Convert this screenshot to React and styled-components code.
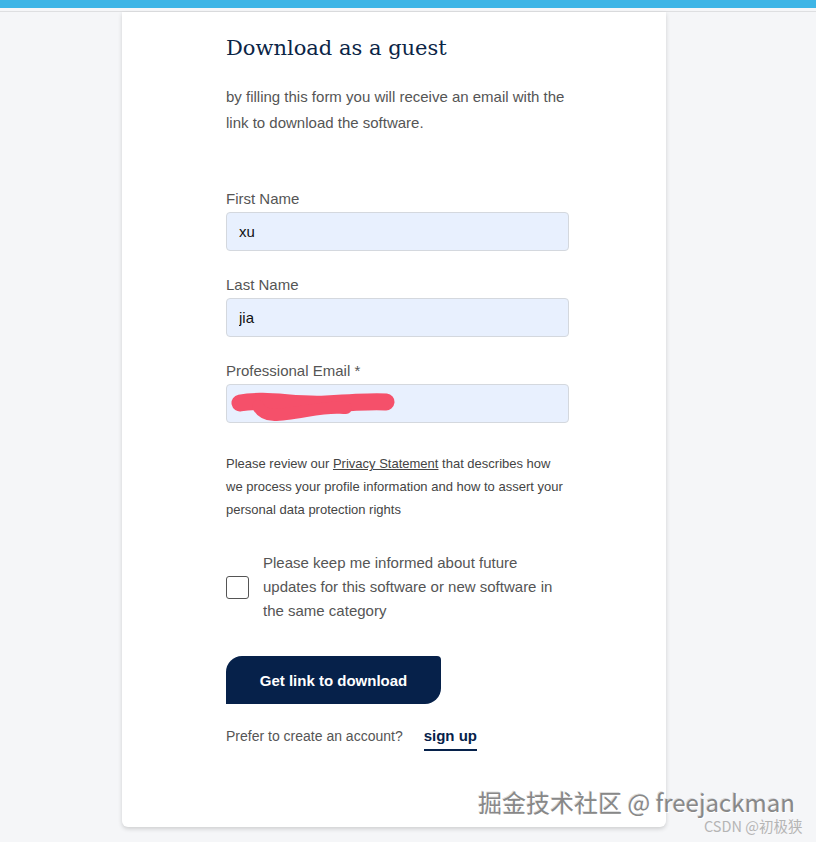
import styled, { createGlobalStyle } from "styled-components";

const GlobalStyle = createGlobalStyle`
	html, body {
		margin: 0;
		padding: 0;
		background: #f5f6f8;
	}
	body {
		font-family: "Liberation Sans", Arial, sans-serif;
	}
`;

const Page = styled.div`
	position: relative;
	min-height: 842px;
	overflow: hidden;
`;

const TopBar = styled.div`
	height: 8px;
	background: #3db5e6;
`;

const Divider = styled.div`
	margin-top: 3px;
	border-top: 1px solid #dedfe1;
`;

const Card = styled.div`
	margin-left: 122px;
	width: 544px;
	height: 815px;
	box-sizing: border-box;
	padding: 23px 0 0 104px;
	background: #fff;
	border-radius: 0 0 6px 6px;
	box-shadow: 0 2px 4px rgba(0, 0, 0, 0.16);
`;

const Content = styled.div`
	width: 343px;
`;

const Title = styled.h2`
	margin: 0;
	font-family: "DejaVu Serif", serif;
	font-weight: normal;
	font-size: 21px;
	line-height: 26px;
	color: #0b2546;
`;

const Intro = styled.p`
	margin: 23px 0 0;
	font-size: 15px;
	line-height: 26px;
	color: #555;
`;

const Form = styled.form`
	margin-top: 53px;
	display: flex;
	flex-direction: column;
	gap: 24px;
`;

const Field = styled.div`
	display: flex;
	flex-direction: column;
	gap: 3px;
`;

const Label = styled.label`
	font-size: 15px;
	line-height: 20px;
	color: #555;
`;

const InputWrap = styled.div`
	position: relative;
`;

const Input = styled.input`
	box-sizing: border-box;
	width: 100%;
	height: 39px;
	padding: 0 12px;
	border: 1px solid #d4d8de;
	border-radius: 4px;
	background: #e8f0fe;
	font-family: "Liberation Sans", Arial, sans-serif;
	font-size: 15px;
	color: #111;
	outline: none;
`;

const Scribble = styled.svg`
	position: absolute;
	left: 0;
	top: 0;
	pointer-events: none;
`;

const Notice = styled.p`
	margin: 29px 0 0;
	font-size: 13px;
	line-height: 23px;
	color: #444;

	a {
		color: #444;
		text-decoration: underline;
	}
`;

const CheckRow = styled.label`
	margin-top: 30px;
	display: flex;
	align-items: center;
	gap: 14px;
`;

const Box = styled.span`
	flex: none;
	width: 21px;
	height: 21px;
	border: 1px solid #555;
	border-radius: 3px;
`;

const CheckText = styled.span`
	font-size: 15px;
	line-height: 24px;
	color: #555;
`;

const Button = styled.button`
	margin-top: 33px;
	width: 215px;
	height: 48px;
	border: none;
	border-radius: 16px 4px 16px 0;
	background: #06214a;
	color: #fff;
	font-family: "Liberation Sans", Arial, sans-serif;
	font-weight: bold;
	font-size: 15px;
`;

const Footer = styled.div`
	margin-top: 22px;
	display: flex;
	align-items: baseline;
	gap: 21px;
	font-size: 14px;
	line-height: 20px;
	color: #555;
`;

const SignUp = styled.a`
	padding-bottom: 3px;
	border-bottom: 2px solid #06214a;
	font-weight: bold;
	font-size: 15px;
	color: #06214a;
	text-decoration: none;
`;

const Watermark = styled.div`
	position: absolute;
	left: 478px;
	top: 786px;
	font-family: "Noto Sans CJK SC", sans-serif;
	font-size: 24px;
	line-height: 32px;
	color: #888;
	text-shadow: 1px 1px 0 #fff, -1px -1px 0 rgba(0, 0, 0, 0.12);
	white-space: nowrap;
`;

const SubMark = styled.div`
	position: absolute;
	left: 704px;
	top: 815px;
	font-family: "Noto Sans CJK SC", sans-serif;
	font-size: 14.5px;
	line-height: 22px;
	color: #b5b5b5;
	white-space: nowrap;
`;

const fields = [
	{ label: "First Name", value: "xu" },
	{ label: "Last Name", value: "jia" },
	{ label: "Professional Email *", value: "", hidden: true },
];

const App = () => {
	return (
		<Page>
			<GlobalStyle />
			<TopBar />
			<Divider />
			<Card>
				<Content>
					<Title>Download as a guest</Title>
					<Intro>
						by filling this form you will receive an email with the link to
						download the software.
					</Intro>
					<Form>
						{fields.map((f) => (
							<Field key={f.label}>
								<Label>{f.label}</Label>
								<InputWrap>
									<Input defaultValue={f.value} readOnly />
									{f.hidden && (
										<Scribble width="180" height="40" viewBox="0 0 180 40">
											<path
												d="M14 19 C 40 14, 70 22, 100 20 S 150 17, 160 18"
												fill="none"
												stroke="#f5506a"
												strokeWidth="17"
												strokeLinecap="round"
											/>
											<path
												d="M32 22 C 38 34, 50 32, 80 27 S 110 24, 120 24"
												fill="none"
												stroke="#f5506a"
												strokeWidth="12"
												strokeLinecap="round"
											/>
										</Scribble>
									)}
								</InputWrap>
							</Field>
						))}
					</Form>
					<Notice>
						Please review our <a href="#">Privacy Statement</a> that describes
						how we process your profile information and how to assert your
						personal data protection rights
					</Notice>
					<CheckRow>
						<Box />
						<CheckText>
							Please keep me informed about future updates for this software or
							new software in the same category
						</CheckText>
					</CheckRow>
					<Button type="button">Get link to download</Button>
					<Footer>
						<span>Prefer to create an account?</span>
						<SignUp href="#">sign up</SignUp>
					</Footer>
				</Content>
			</Card>
			<Watermark>掘金技术社区 @ freejackman</Watermark>
			<SubMark>CSDN @初极狭</SubMark>
		</Page>
	);
};

export default App;
